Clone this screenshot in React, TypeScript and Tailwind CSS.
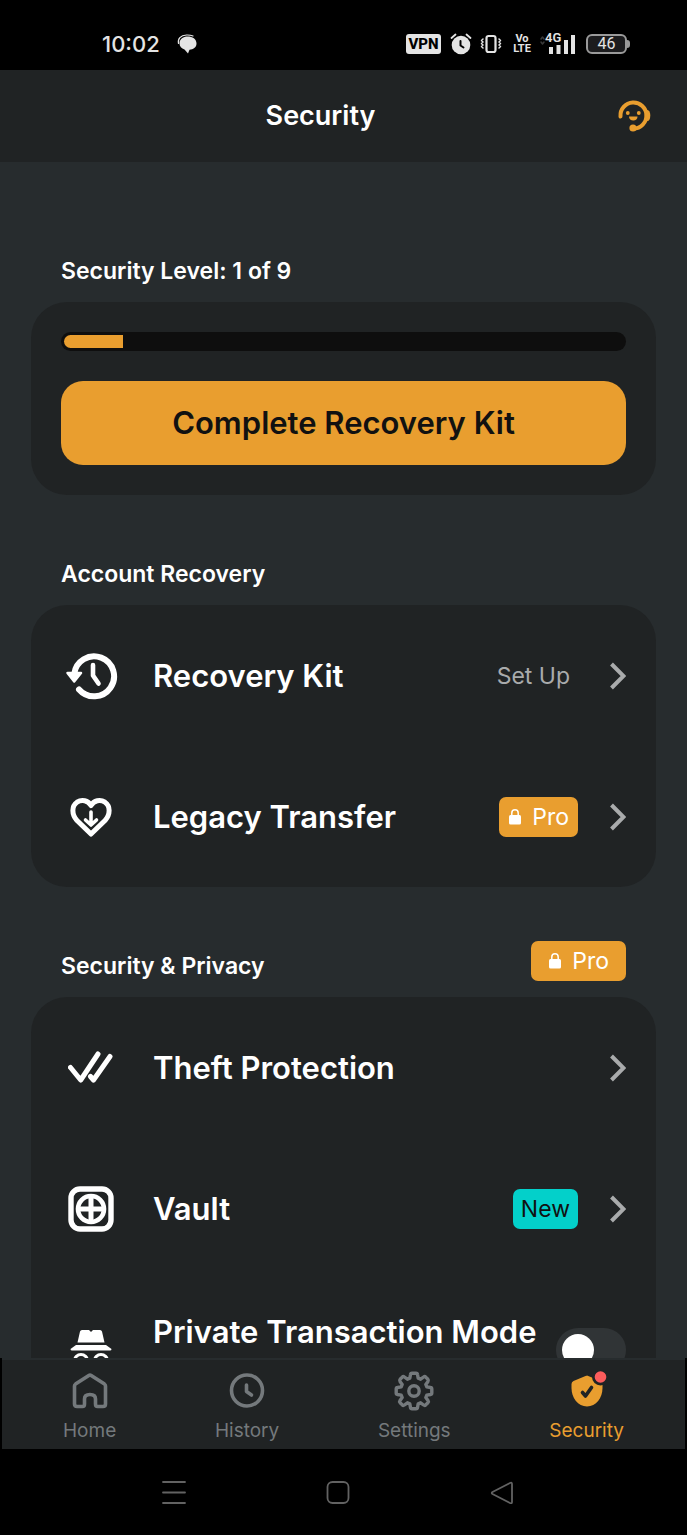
import { useState, type ReactNode } from "react";

type IconProps = { children: ReactNode; w: number; h: number };

function Icon({ children, w, h }: IconProps) {
  return (
    <svg
      width={w}
      height={h}
      viewBox={`0 0 ${w} ${h}`}
      fill="none"
      stroke="currentColor"
      strokeLinecap="round"
      strokeLinejoin="round"
      className="shrink-0"
      aria-hidden
    >
      {children}
    </svg>
  );
}

function Chevron() {
  return (
    <span className="text-[#a9abac]">
      <Icon w={16} h={28}>
        <path d="M1.500 2 L13.500 14 L1.500 26" strokeWidth="4" strokeLinecap="butt" strokeLinejoin="miter" />
      </Icon>
    </span>
  );
}

function ProBadge({ wide = false }: { wide?: boolean }) {
  return (
    <span
      className={`flex h-10 items-center gap-[10px] rounded-[7px] bg-[#e99e2f] text-[23px] leading-7 text-white ${
        wide ? "px-[17px]" : "px-[9px]"
      }`}
    >
      <Icon w={14} h={18}>
        <rect x="1" y="7" width="12" height="9.500" rx="1.500" fill="currentColor" stroke="none" />
        <path d="M3.800 8 V5 A3.200 3.200 0 0 1 10.200 5 V8" strokeWidth="1.500" />
      </Icon>
      Pro
    </span>
  );
}

function StatusBar() {
  return (
    <div className="flex h-[70px] shrink-0 items-center justify-between bg-black pt-[18px] pr-[57px] pl-[102px] text-[#e4e4e4]">
      <div className="flex items-center gap-4 text-[22px] leading-7 font-medium">
        <time>10:02</time>
        <Icon w={22} h={22}>
          <path
            d="M11.500 3.500 C16.500 3.500 20.500 6 20.500 10.500 C20.500 14.500 17 16.500 13.500 16.800 L12 20.500 L8.500 16.500 C5.500 15.500 3.500 13.500 3.500 10.500 C3.500 6 7.500 3.500 11.500 3.500Z"
            fill="currentColor"
            stroke="none"
          />
          <path d="M2.500 10.500 C1.500 6 4.500 2.300 10.500 2 C13 1.900 15 2.200 17 3" strokeWidth="1.200" />
        </Icon>
      </div>
      <div className="flex items-center font-['Roboto',sans-serif]">
        <span className="flex h-5 w-[35px] items-center justify-center rounded-[3px] bg-[#e4e4e4] text-[15px] leading-5 font-extrabold text-black">
          VPN
        </span>
        <span className="ml-[9px]">
          <Icon w={22} h={22}>
            <circle cx="11" cy="12" r="9.300" fill="currentColor" stroke="none" />
            <path d="M1.500 5 L5.500 1.500 M20.500 5 L16.500 1.500" strokeWidth="1.800" />
            <path d="M10.500 8 V12.500 L13.500 14.500" stroke="#000" strokeWidth="2" />
          </Icon>
        </span>
        <span className="ml-2">
          <Icon w={22} h={20}>
            <rect x="6.500" y="2" width="9" height="16" rx="2" strokeWidth="2.200" />
            <path d="M3 5 l-1.500 1.500 l1.500 1.500 l-1.500 1.500 l1.500 1.500 l-1.500 1.500 l1.500 1.500 M19 5 l1.500 1.500 l-1.500 1.500 l1.500 1.500 l-1.500 1.500 l1.500 1.500 l-1.500 1.500" strokeWidth="1.500" />
          </Icon>
        </span>
        <span className="ml-3 flex w-4 flex-col items-center text-[11px] leading-[10px] font-bold">
          <span>Vo</span>
          <span>LTE</span>
        </span>
        <span className="relative ml-[9px]">
          <Icon w={38} h={22}>
            <path d="M2 6 L3.500 4 L5 6 M2 9 L3.500 11 L5 9" stroke="#3a3a3a" strokeWidth="1.500" />
            <g fill="currentColor" stroke="none">
              <rect x="10" y="14" width="4" height="7" />
              <rect x="17.500" y="12" width="4" height="9" />
              <rect x="25" y="7" width="4" height="14" />
              <rect x="32" y="2" width="4" height="19" />
            </g>
          </Icon>
          <span className="absolute -top-px left-1.5 text-[13px] leading-3 font-semibold">4G</span>
        </span>
        <span className="ml-[9px] flex h-5 w-[41px] items-center justify-center rounded-md border-2 border-[#9a9a9a] bg-[#1c1c1e] text-base leading-4">
          46
        </span>
        <span className="h-2 w-[3px] rounded-r-sm bg-[#9a9a9a]" />
      </div>
    </div>
  );
}

function Header() {
  return (
    <header className="flex h-[92px] shrink-0 items-center bg-[#202324] pr-9 pl-6">
      <h1 className="flex-1 text-center text-[27px] leading-8 font-semibold">Security</h1>
      <button type="button" aria-label="Support" className="text-[#e99e2f]">
        <Icon w={34} h={34}>
          <path d="M3.500 17.500 A13 13 0 1 1 16.500 29.500" strokeWidth="4" />
          <ellipse cx="30.500" cy="16.500" rx="2.800" ry="5.500" fill="currentColor" stroke="none" />
          <g fill="currentColor" stroke="none">
            <circle cx="16" cy="29" r="3.600" />
            <circle cx="10.800" cy="14" r="1.900" />
            <circle cx="21.800" cy="14" r="1.900" />
            <path d="M12 17.500 H20.500 C20.500 20 18.800 21.500 16.300 21.500 C13.800 21.500 12 20 12 17.500Z" />
          </g>
        </Icon>
      </button>
    </header>
  );
}

function Section({ title, badge, children }: { title: string; badge?: ReactNode; children: ReactNode }) {
  return (
    <section className="flex flex-col gap-4">
      <div className="flex h-10 items-end justify-between px-[30px]">
        <h2 className="text-[23px] leading-[30px] font-semibold">{title}</h2>
        {badge}
      </div>
      <div className="rounded-[36px] bg-[#202324]">{children}</div>
    </section>
  );
}

function Row({ icon, label, children }: { icon: ReactNode; label: string; children?: ReactNode }) {
  return (
    <a href="#" className="flex h-[141px] items-center px-[30px]">
      <span className="flex w-[60px] justify-center">{icon}</span>
      <span className="ml-8 flex-1 text-[31px] leading-9 font-semibold">{label}</span>
      {children}
      <span className="ml-8">
        <Chevron />
      </span>
    </a>
  );
}

function Tab({ label, active = false, children }: { label: string; active?: boolean; children: ReactNode }) {
  return (
    <a
      href="#"
      aria-current={active ? "page" : undefined}
      className={`flex flex-col items-center gap-1.5 text-[19px] leading-7 ${
        active ? "text-[#e99e2f]" : "text-[#74797c]"
      }`}
    >
      {children}
      {label}
    </a>
  );
}

const GEAR_PATH =
  "M16.500 3.500 Q16.700 2.200 18 2.200 H22 Q23.300 2.200 23.500 3.500 L24.200 7.200 L26.600 8.200 L29.600 6 Q30.700 5.200 31.700 6.100 L33.900 8.300 Q34.800 9.300 34 10.400 L31.800 13.400 L32.800 15.800 L36.500 16.500 Q37.800 16.700 37.800 18 V22 Q37.800 23.300 36.500 23.500 L32.800 24.200 L31.800 26.600 L34 29.600 Q34.800 30.700 33.900 31.700 L31.700 33.900 Q30.700 34.800 29.600 34 L26.600 31.800 L24.200 32.800 L23.500 36.500 Q23.300 37.800 22 37.800 H18 Q16.700 37.800 16.500 36.500 L15.800 32.800 L13.400 31.800 L10.400 34 Q9.300 34.800 8.300 33.900 L6.100 31.700 Q5.200 30.700 6 29.600 L8.200 26.600 L7.200 24.200 L3.500 23.500 Q2.200 23.300 2.200 22 V18 Q2.200 16.700 3.500 16.500 L7.200 15.800 L8.200 13.400 L6 10.400 Q5.200 9.300 6.100 8.300 L8.300 6.100 Q9.300 5.200 10.400 6 L13.400 8.200 L15.800 7.200 Z";

function TabBar() {
  return (
    <div className="shrink-0 bg-black px-[2px]">
      <nav className="flex h-[91px] items-start justify-between border-t-2 border-[#272c2e] bg-[#202324] px-[61px] pt-[11px]">
        <Tab label="Home">
          <Icon w={40} h={40}>
            <path
              d="M4.500 15 Q4.500 13.800 5.500 13.100 L18.800 4.400 Q20 3.600 21.200 4.400 L34.500 13.100 Q35.500 13.800 35.500 15 V33 Q35.500 35.500 33 35.500 H27.500 Q25.500 35.500 25.500 33 V28 Q25.500 23.500 20 23.500 Q14.500 23.500 14.500 28 V33 Q14.500 35.500 12.500 35.500 H7 Q4.500 35.500 4.500 33 Z"
              strokeWidth="3.600"
            />
          </Icon>
        </Tab>
        <Tab label="History">
          <Icon w={40} h={40}>
            <circle cx="20" cy="19.500" r="15.500" strokeWidth="3.600" />
            <path d="M19.500 14 V20.500 L24.500 24" strokeWidth="3.600" />
          </Icon>
        </Tab>
        <Tab label="Settings">
          <Icon w={40} h={40}>
            <path d={GEAR_PATH} strokeWidth="3.400" />
            <circle cx="20" cy="20" r="5.200" strokeWidth="3.400" />
          </Icon>
        </Tab>
        <Tab label="Security" active>
          <Icon w={40} h={40}>
            <path
              d="M20 4.500 L33.500 10 Q35.500 11 35.500 13 V17 C35.500 27 29 35.500 20 35.500 C11 35.500 4.500 27 4.500 17 V13 Q4.500 11 6.500 10 L18.500 5 Q20 4.500 20 4.500Z"
              fill="currentColor"
              stroke="none"
            />
            <path d="M15.500 21.500 L18.500 25 L24.500 16.500" stroke="#202324" strokeWidth="3.600" />
            <circle cx="33.500" cy="6" r="8.500" fill="#202324" stroke="none" />
            <circle cx="33.500" cy="6" r="5.800" fill="#fc5c5c" stroke="none" />
          </Icon>
        </Tab>
      </nav>
    </div>
  );
}

function SystemNav() {
  return (
    <div className="flex h-[86px] shrink-0 items-center justify-center gap-[140px] bg-black pr-[11px] text-[#626262]">
      <button type="button" aria-label="Recent apps">
        <Icon w={24} h={24}>
          <path d="M1 2 H23 M1 12.500 H23 M1 23 H23" strokeWidth="1.800" />
        </Icon>
      </button>
      <button type="button" aria-label="Home screen">
        <Icon w={24} h={24}>
          <rect x="1.500" y="2" width="21" height="21" rx="5" strokeWidth="1.800" />
        </Icon>
      </button>
      <button type="button" aria-label="Back">
        <Icon w={24} h={24}>
          <path d="M20 3 Q22 2 22 4 V22 Q22 24 20 23 L2.500 14 Q1 13 2.500 12 Z" strokeWidth="1.800" />
        </Icon>
      </button>
    </div>
  );
}

export default function App() {
  const [privateMode, setPrivateMode] = useState(false);
  const progress = 10.6;

  return (
    <div className="flex h-screen flex-col bg-[#272c2e] font-['Inter',sans-serif] text-white">
      <StatusBar />
      <Header />
      <main className="flex min-h-0 flex-1 flex-col gap-[54px] overflow-hidden px-[31px] pt-[84px]">
        <Section title="Security Level: 1 of 9">
          <div className="flex flex-col gap-[30px] p-[30px]">
            <div
              role="progressbar"
              aria-label="Security level"
              aria-valuenow={1}
              aria-valuemax={9}
              className="h-[19px] rounded-full bg-[#0e0e0e] p-[3px]"
            >
              <div className="h-full rounded-l-full bg-[#e99e2f]" style={{ width: `${progress}%` }} />
            </div>
            <button
              type="button"
              className="h-[84px] w-full rounded-[22px] bg-[#e99e2f] text-[31px] leading-9 font-semibold text-[#111111]"
            >
              Complete Recovery Kit
            </button>
          </div>
        </Section>

        <Section title="Account Recovery">
          <Row
            label="Recovery Kit"
            icon={
              <Icon w={54} h={48}>
                <path d="M10.200 22 A20 20 0 1 1 15 37.500" strokeWidth="6" />
                <path d="M3.500 21 H17 L10.200 29.500Z" fill="currentColor" strokeWidth="2.500" />
                <path d="M29 13 V23.500 L34.500 31.500" strokeWidth="4.600" />
              </Icon>
            }
          >
            <span className="pr-2 text-[23px] leading-7 text-[#a9abac]">Set Up</span>
          </Row>
          <Row
            label="Legacy Transfer"
            icon={
              <Icon w={42} h={40}>
                <path
                  d="M21 37 L7 23.500 C1.500 17.500 1.500 9 7 5.200 C12 2 18 3.500 21 8.500 C24 3.500 30 2 35 5.200 C40.500 9 40.500 17.500 35 23.500 Z"
                  strokeWidth="5"
                />
                <path d="M21 15 V27.500 M15.500 23 L21 28 L26.500 23" strokeWidth="3.600" />
              </Icon>
            }
          >
            <ProBadge />
          </Row>
        </Section>

        <Section title="Security & Privacy" badge={<ProBadge wide />}>
          <Row
            label="Theft Protection"
            icon={
              <Icon w={46} h={34}>
                <path d="M2.500 16.500 L12.700 29 L30 3 M22.500 25.500 L25.500 29 L42 5.500" strokeWidth="5" />
              </Icon>
            }
          />
          <Row
            label="Vault"
            icon={
              <Icon w={46} h={46}>
                <rect x="3" y="3" width="40" height="40" rx="9" strokeWidth="5.400" />
                <circle cx="23" cy="23" r="13" strokeWidth="4.600" />
                <path d="M23 11 V35 M11 23 H35" strokeWidth="5" />
              </Icon>
            }
          >
            <span className="flex h-10 items-center rounded-[7px] bg-[#03d0ca] px-2 text-[23px] leading-7 text-[#111111]">
              New
            </span>
          </Row>
          <label className="flex h-[141px] items-center px-[30px]">
            <span className="flex w-[60px] justify-center">
              <Icon w={42} h={42}>
                <g fill="currentColor" stroke="none">
                  <path d="M12 1 H19 L21 3 L23 1 H30 Q31.500 1 32 2.500 L34.500 13.500 H7.500 L10 2.500 Q10.500 1 12 1Z" />
                  <path d="M6 16 H36 L41.500 20 Q41.500 21.500 40 21.500 H2 Q0.500 21.500 0.500 20Z" />
                </g>
                <circle cx="11" cy="32" r="6.500" strokeWidth="3" />
                <circle cx="31" cy="32" r="6.500" strokeWidth="3" />
                <path d="M17 32 Q21 29 25 32" strokeWidth="3" />
              </Icon>
            </span>
            <span className="ml-8 flex-1 pb-9 text-[31px] leading-9 font-semibold whitespace-nowrap">
              Private Transaction Mode
            </span>
            <input
              type="checkbox"
              role="switch"
              checked={privateMode}
              onChange={(e) => setPrivateMode(e.target.checked)}
              className="flex h-11 w-[70px] shrink-0 appearance-none items-center rounded-full bg-[#303436] px-[6px] before:size-8 before:rounded-full before:bg-white before:content-[''] checked:justify-end checked:bg-[#e99e2f]"
            />
          </label>
        </Section>
      </main>
      <TabBar />
      <SystemNav />
    </div>
  );
}
